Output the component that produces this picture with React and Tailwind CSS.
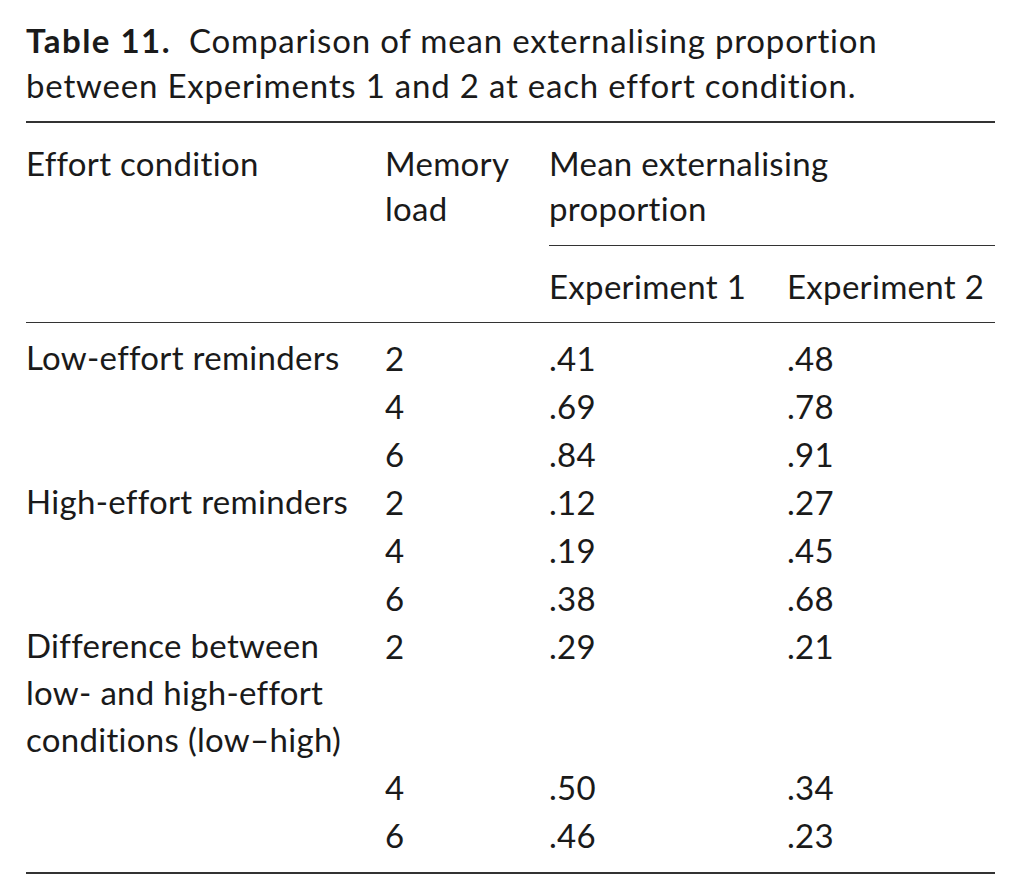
const rows = [
  { effort: ['Low-effort reminders'], load: '2', e1: '.41', e2: '.48' },
  { effort: [], load: '4', e1: '.69', e2: '.78' },
  { effort: [], load: '6', e1: '.84', e2: '.91' },
  { effort: ['High-effort reminders'], load: '2', e1: '.12', e2: '.27' },
  { effort: [], load: '4', e1: '.19', e2: '.45' },
  { effort: [], load: '6', e1: '.38', e2: '.68' },
  { effort: ['Difference between', 'low- and high-effort', 'conditions (low\u2013high)'], load: '2', e1: '.29', e2: '.21' },
  { effort: [], load: '4', e1: '.50', e2: '.34' },
  { effort: [], load: '6', e1: '.46', e2: '.23' },
];

export default function App() {
  return (
    <div className="min-h-[894px] w-[1021px] bg-white pl-[26px] pr-[26px] text-[#1a1a1a] font-['Lato',sans-serif] text-[33px] leading-[45px] tracking-[0.3px]">
      <p className="pt-[18px] whitespace-nowrap">
        <span className="mr-[18px] font-bold tracking-[1.5px]">Table 11.</span>
        <span className="tracking-[0.8px]">Comparison of mean externalising proportion</span>
        <br />
        <span className="tracking-[0.8px]">between Experiments 1 and 2 at each effort condition.</span>
      </p>

      <div className="mt-[13px] border-t-2 border-[#333]" />

      <div className="grid grid-cols-[359px_164px_238px_1fr]">
        <div className="pt-[18px]">Effort condition</div>
        <div className="pt-[18px]">Memory<br />load</div>
        <div className="col-span-2 pt-[18px]">
          <div className="pb-[14px]">Mean externalising<br />proportion</div>
          <div className="grid grid-cols-[238px_1fr] border-t-[1.5px] border-[#333] pt-[18px] pb-[13px] whitespace-nowrap">
            <div>Experiment 1</div>
            <div>Experiment 2</div>
          </div>
        </div>
      </div>

      <div className="border-t-[1.5px] border-[#333]" />

      <div className="grid grid-cols-[359px_164px_238px_1fr] pt-[11px] pb-[13px] leading-[48px]">
        {rows.map((r, i) => (
          <div key={i} className="contents">
            <div className="whitespace-nowrap leading-[47px]">
              {r.effort.map((line) => (
                <div key={line}>{line}</div>
              ))}
            </div>
            <div>{r.load}</div>
            <div>{r.e1}</div>
            <div>{r.e2}</div>
          </div>
        ))}
      </div>

      <div className="border-t-2 border-[#333]" />
    </div>
  );
}
